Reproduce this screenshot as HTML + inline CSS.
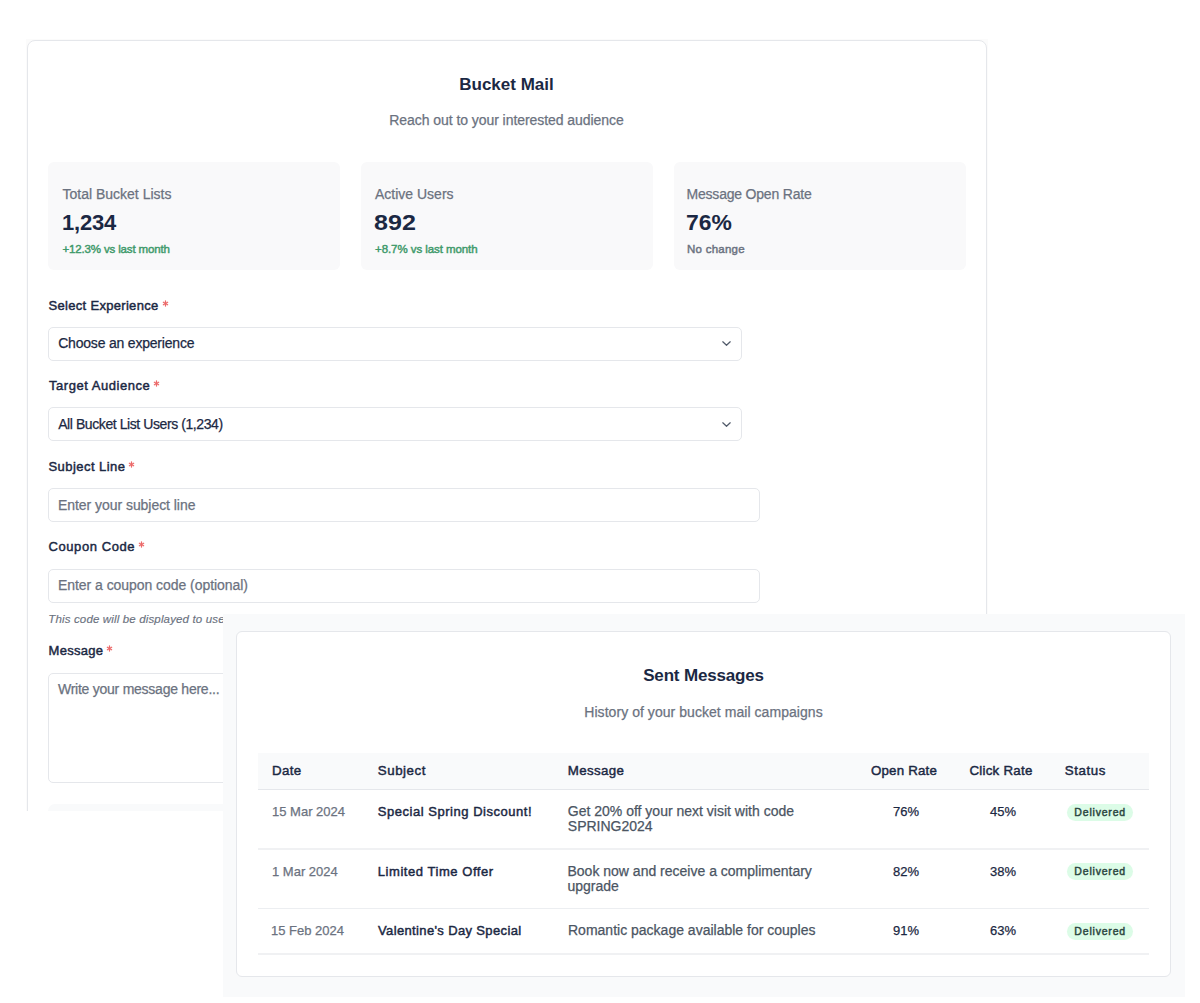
<!DOCTYPE html>
<html>
<head>
<meta charset="utf-8">
<style>
*{box-sizing:border-box;margin:0;padding:0}
html,body{width:1200px;height:1003px;overflow:hidden;background:#ffffff}
body{position:relative;font-family:"Liberation Sans",sans-serif;color:#1b2843}
.a{position:absolute}
.t{position:absolute;white-space:nowrap;line-height:1}
#w1{left:26px;top:39px;width:962px;height:772px;background:#fbfbfb;overflow:hidden}
#c1{position:absolute;left:1px;top:1px;width:960px;height:900px;background:#fff;border:1px solid #e5e7eb;border-radius:8px}
.stat{position:absolute;top:162px;width:292px;height:108px;background:#f9f9fa;border-radius:6px}
.sl{font-size:14px;color:#6b7280}
.sv{font-size:22px;font-weight:700;color:#1b2843}
.sc{font-size:11.5px;font-weight:700;color:#3f9a6b;letter-spacing:-0.4px}
.lb{font-size:13px;font-weight:700;color:#1b2843}
.req{color:#ef6b6b;font-weight:700}
.box{position:absolute;left:48px;border:1px solid #e5e7eb;border-radius:5px;background:#fff}
.val{font-size:14px;color:#1b2843}
.ph{font-size:14px;color:#6b7280}
#w2{left:223px;top:614px;width:962px;height:383px;background:#f9fafb}
#c2{position:absolute;left:13px;top:17px;width:935px;height:346px;background:#fff;border:1px solid #e5e7eb;border-radius:6px}
.th{font-size:13.3px;font-weight:700;color:#1b2843}
.td{font-size:13px}
.dt{color:#6b7280}
.sb{font-weight:700;color:#1b2843}
.ms{color:#4b5563;line-height:15px;font-size:14px}
.rt{text-align:center;color:#1b2843}
.bd{position:absolute;width:65.5px;height:17px;border-radius:9px;background:#dcfce7;color:#2a4540;font-size:10.5px;font-weight:700;line-height:16px;text-align:center;white-space:nowrap;letter-spacing:0.8px;text-indent:0.8px}
.rg{-webkit-text-stroke:0.25px currentColor}
.sm{font-weight:400 !important;-webkit-text-stroke:0.45px currentColor}
.ast{position:absolute}
</style>
</head>
<body>
<div id="w1" class="a">
 <div id="c1"></div>
</div>

<!-- Card 1 content (page coords) -->
<div class="t" style="left:0;width:1013px;text-align:center;top:76.2px;font-size:17px;font-weight:700;letter-spacing:0px">Bucket Mail</div>
<div class="t rg" style="left:0;width:1013px;text-align:center;top:113.4px;font-size:14px;color:#6b7280;letter-spacing:-0.06px">Reach out to your interested audience</div>

<div class="stat" style="left:48px"></div>
<div class="stat" style="left:361px"></div>
<div class="stat" style="left:674px"></div>

<div class="t sl rg" style="left:62.5px;top:187.3px">Total Bucket Lists</div>
<div class="t sv" style="left:62px;top:212px;letter-spacing:-0.2px">1,234</div>
<div class="t sc sm" style="left:62.5px;top:243.5px;letter-spacing:-0.15px">+12.3% vs last month</div>

<div class="t sl rg" style="left:375px;top:187.3px">Active Users</div>
<div class="t sv" style="left:374.2px;top:212px;transform:scaleX(1.14);transform-origin:0 0">892</div>
<div class="t sc sm" style="left:375px;top:243.5px;letter-spacing:-0.07px">+8.7% vs last month</div>

<div class="t sl rg" style="left:686.5px;top:187.3px;letter-spacing:-0.2px">Message Open Rate</div>
<div class="t sv" style="left:686.2px;top:212px;transform:scaleX(1.04);transform-origin:0 0">76%</div>
<div class="t sc sm" style="left:687px;top:243.5px;color:#6b7280;letter-spacing:0.25px">No change</div>

<!-- form -->
<div class="t lb sm" style="left:48.5px;top:299px;letter-spacing:0.31px">Select Experience</div><svg class="ast" style="left:162.1px;top:299.5px" width="7" height="7" viewBox="0 0 7 7"><g stroke="#ec6a6a" stroke-width="1.3" stroke-linecap="round"><line x1="3.5" y1="1" x2="3.5" y2="6"/><line x1="1.35" y1="2.25" x2="5.65" y2="4.75"/><line x1="1.35" y1="4.75" x2="5.65" y2="2.25"/></g></svg>
<div class="box" style="top:327px;width:694px;height:34px"></div>
<div class="t val rg" style="left:58.2px;top:336.3px;letter-spacing:-0.2px">Choose an experience</div>
<svg class="a" style="left:721px;top:339px" width="11" height="9" viewBox="0 0 11 9"><path d="M1.8 2.8 L5.5 6.3 L9.2 2.8" fill="none" stroke="#525c6b" stroke-width="1.25" stroke-linecap="round" stroke-linejoin="round"/></svg>

<div class="t lb sm" style="left:49px;top:378.8px;letter-spacing:0.54px">Target Audience</div><svg class="ast" style="left:153.0px;top:380.1px" width="7" height="7" viewBox="0 0 7 7"><g stroke="#ec6a6a" stroke-width="1.3" stroke-linecap="round"><line x1="3.5" y1="1" x2="3.5" y2="6"/><line x1="1.35" y1="2.25" x2="5.65" y2="4.75"/><line x1="1.35" y1="4.75" x2="5.65" y2="2.25"/></g></svg>
<div class="box" style="top:407px;width:694px;height:34px"></div>
<div class="t val rg" style="left:58.2px;top:416.6px;letter-spacing:-0.42px">All Bucket List Users (1,234)</div>
<svg class="a" style="left:721px;top:420px" width="11" height="9" viewBox="0 0 11 9"><path d="M1.8 2.8 L5.5 6.3 L9.2 2.8" fill="none" stroke="#525c6b" stroke-width="1.25" stroke-linecap="round" stroke-linejoin="round"/></svg>

<div class="t lb sm" style="left:48.5px;top:459.9px;letter-spacing:0.44px">Subject Line</div><svg class="ast" style="left:128.0px;top:460.5px" width="7" height="7" viewBox="0 0 7 7"><g stroke="#ec6a6a" stroke-width="1.3" stroke-linecap="round"><line x1="3.5" y1="1" x2="3.5" y2="6"/><line x1="1.35" y1="2.25" x2="5.65" y2="4.75"/><line x1="1.35" y1="4.75" x2="5.65" y2="2.25"/></g></svg>
<div class="box" style="top:488px;width:712px;height:34px"></div>
<div class="t ph rg" style="left:58px;top:497.5px;letter-spacing:-0.05px">Enter your subject line</div>

<div class="t lb sm" style="left:48.5px;top:539.5px;letter-spacing:0.58px">Coupon Code</div><svg class="ast" style="left:137.5px;top:541.0px" width="7" height="7" viewBox="0 0 7 7"><g stroke="#ec6a6a" stroke-width="1.3" stroke-linecap="round"><line x1="3.5" y1="1" x2="3.5" y2="6"/><line x1="1.35" y1="2.25" x2="5.65" y2="4.75"/><line x1="1.35" y1="4.75" x2="5.65" y2="2.25"/></g></svg>
<div class="box" style="top:568.5px;width:712px;height:34px"></div>
<div class="t ph rg" style="left:58px;top:577.5px;letter-spacing:-0.05px">Enter a coupon code (optional)</div>

<div class="t rg" style="left:48.3px;top:613.6px;font-size:11.5px;font-style:italic;color:#6b7280;letter-spacing:0.15px;-webkit-text-stroke:0.15px #6b7280">This code will be displayed to users when they redeem their offer</div>

<div class="t lb sm" style="left:48.5px;top:644px;letter-spacing:0.3px">Message</div><svg class="ast" style="left:105.8px;top:645.0px" width="7" height="7" viewBox="0 0 7 7"><g stroke="#ec6a6a" stroke-width="1.3" stroke-linecap="round"><line x1="3.5" y1="1" x2="3.5" y2="6"/><line x1="1.35" y1="2.25" x2="5.65" y2="4.75"/><line x1="1.35" y1="4.75" x2="5.65" y2="2.25"/></g></svg>
<div class="box" style="top:673px;width:712px;height:110px"></div>
<div class="t ph rg" style="left:58px;top:681.5px;letter-spacing:-0.25px">Write your message here...</div>

<div class="a" style="left:48px;top:803.5px;width:918px;height:7.5px;background:#f9fafb;border-radius:8px 8px 0 0"></div>

<!-- Panel 2 -->
<div id="w2" class="a">
 <div id="c2"></div>
</div>
<div class="t" style="left:237px;width:933px;text-align:center;top:666.5px;font-size:17px;font-weight:700;letter-spacing:-0.17px">Sent Messages</div>
<div class="t rg" style="left:237px;width:933px;text-align:center;top:705.2px;font-size:14px;color:#6b7280;letter-spacing:0.05px">History of your bucket mail campaigns</div>

<div class="a" style="left:258px;top:753px;width:891px;height:37px;background:#f9fafb;border-bottom:1px solid #e5e7eb"></div>
<div class="a" style="left:258px;top:848px;width:891px;height:2px;background:#f0f1f3"></div>
<div class="a" style="left:258px;top:908px;width:891px;height:1px;background:#eceef1"></div>
<div class="a" style="left:258px;top:953px;width:891px;height:2px;background:#f0f1f3"></div>

<div class="t th sm" style="left:272px;top:763.5px;letter-spacing:0.35px">Date</div>
<div class="t th sm" style="left:377.8px;top:763.5px;letter-spacing:0.55px">Subject</div>
<div class="t th sm" style="left:567.8px;top:763.5px;letter-spacing:0.35px">Message</div>
<div class="t th sm" style="left:857px;width:94px;text-align:center;top:763.5px;letter-spacing:0.2px">Open Rate</div>
<div class="t th sm" style="left:951px;width:100px;text-align:center;top:763.5px;letter-spacing:0.25px">Click Rate</div>
<div class="t th sm" style="left:1064.8px;top:763.5px;letter-spacing:0.6px">Status</div>

<div class="t td dt rg" style="left:272px;top:805px">15 Mar 2024</div>
<div class="t td sb sm" style="left:377.8px;top:805px;letter-spacing:0.53px">Special Spring Discount!</div>
<div class="t ms rg" style="left:567.8px;top:804.4px">Get 20% off your next visit with code<br>SPRING2024</div>
<div class="t td rt rg" style="left:857px;width:98px;top:805px">76%</div>
<div class="t td rt rg" style="left:951px;width:104px;top:805px">45%</div>
<div class="bd sm" style="left:1067px;top:804px">Delivered</div>

<div class="t td dt rg" style="left:272px;top:864.8px">1 Mar 2024</div>
<div class="t td sb sm" style="left:377.8px;top:864.8px;letter-spacing:0.55px">Limited Time Offer</div>
<div class="t ms rg" style="left:567.5px;top:864.1px">Book now and receive a complimentary<br>upgrade</div>
<div class="t td rt rg" style="left:857px;width:98px;top:864.8px">82%</div>
<div class="t td rt rg" style="left:951px;width:104px;top:864.8px">38%</div>
<div class="bd sm" style="left:1067px;top:863px">Delivered</div>

<div class="t td dt rg" style="left:271px;top:923.8px">15 Feb 2024</div>
<div class="t td sb sm" style="left:378px;top:923.8px;letter-spacing:0.36px">Valentine's Day Special</div>
<div class="t ms rg" style="left:568px;top:922.7px">Romantic package available for couples</div>
<div class="t td rt rg" style="left:857px;width:98px;top:923.8px">91%</div>
<div class="t td rt rg" style="left:951px;width:104px;top:923.8px">63%</div>
<div class="bd sm" style="left:1067px;top:923px">Delivered</div>
</body>
</html>
